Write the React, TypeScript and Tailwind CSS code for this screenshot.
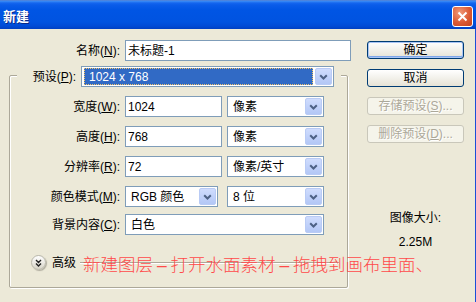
import type {ReactNode} from 'react';

// XP-style chevron used in the combo boxes
function Chevron() {
  return (
    <svg width="9" height="6" viewBox="0 0 9 6">
      <path d="M1.2 1.2 4.5 4.5 7.8 1.2" fill="none" stroke="#4d6185" strokeWidth="2" />
    </svg>
  );
}

function Select({
  width,
  children,
  active = false,
}: {
  width: string;
  children: ReactNode;
  active?: boolean;
}) {
  return (
    <div className={`flex h-[21px] items-stretch border border-[#7f9db9] bg-white p-px ${width}`}>
      {active ? (
        <div className="mr-[2px] ml-px flex flex-1 items-center border border-dotted border-[#f0c36a] bg-[#316ac5] pl-[4px] text-white">
          {children}
        </div>
      ) : (
        <div className="flex flex-1 items-center pl-[4px]">{children}</div>
      )}
      <div className="flex w-[17px] items-center justify-center rounded-[2px] border border-[#b9cbf5] bg-gradient-to-b from-[#cfdcfd] to-[#b3c7f6]">
        <Chevron />
      </div>
    </div>
  );
}

function Input({width, value}: {width: string; value: string}) {
  return (
    <div className={`flex h-[21px] items-center border border-[#7f9db9] bg-white pl-[2px] ${width}`}>
      {value}
    </div>
  );
}

function Label({text, keyChar}: {text: string; keyChar: string}) {
  return (
    <span>
      {text}(<u>{keyChar}</u>):
    </span>
  );
}

function Row({label, children}: {label: ReactNode; children: ReactNode}) {
  return (
    <div className="flex items-center">
      <div className="w-[110px] text-right">{label}</div>
      <div className="ml-[5px] flex items-center">{children}</div>
    </div>
  );
}

function Button({
  children,
  variant = 'normal',
}: {
  children: ReactNode;
  variant?: 'default' | 'normal' | 'disabled';
}) {
  const styles = {
    default:
      'border-[#003c74] bg-gradient-to-b from-white to-[#e6e3d6] shadow-[inset_0_0_0_1px_#a9c5f5,inset_0_-1px_0_1px_#7ea6ea] text-black',
    normal: 'border-[#003c74] bg-gradient-to-b from-white to-[#e6e3d6] text-black',
    disabled: 'border-[#c9c7ba] bg-[#f5f4ea] text-[#aca899]',
  };
  return (
    <div
      className={`flex h-[18px] w-[97px] items-center justify-center rounded-[3px] border ${styles[variant]}`}
    >
      {children}
    </div>
  );
}

function Dash() {
  return <span className="inline-block w-[17.5px] text-center">–</span>;
}

export default function App() {
  return (
    <div className="relative h-[302px] w-[476px] overflow-hidden bg-[#ece9d8] font-[family-name:'Liberation_Sans','Noto_Sans_CJK_SC',sans-serif] text-[12px] leading-[14px] text-black">
      {/* Title bar */}
      <div className="flex h-[29px] items-start justify-between bg-[linear-gradient(to_bottom,#5a7bc4_0px,#3d8ef6_1px,#1466ef_3px,#0a5ce9_5px,#0055e4_10px,#0053e0_22px,#004bd6_26px,#0040c2_29px)]">
        <span className="pt-[10px] pl-[3px] text-[13px] leading-[14px] font-bold text-white [text-shadow:1px_1px_0_#0b2a88]">
          新建
        </span>
        <div className="mt-[6px] mr-[3px] flex h-[21px] w-[21px] items-center justify-center rounded-[3px] border border-white bg-[radial-gradient(circle_at_35%_30%,#f09a7a,#dc5a34_55%,#c2411c)]">
          <svg width="11" height="11" viewBox="0 0 11 11">
            <path d="M1.5 1.5 9.5 9.5M9.5 1.5 1.5 9.5" stroke="white" strokeWidth="2" />
          </svg>
        </div>
      </div>

      <div className="flex h-[273px] border-r border-[#1b4fd8]">
        {/* Left column */}
        <div className="w-[360px]">
          <div className="mt-[11px] flex items-center">
            <div className="w-[120px] text-right">
              <Label text="名称" keyChar="N" />
            </div>
            <Input width="ml-[5px] w-[226px]" value="未标题-1" />
          </div>

          {/* Preset group box */}
          <div className="mt-[14px] ml-[9px] h-[213px] w-[339px] rounded-[2px] border border-[#aca899] shadow-[inset_1px_1px_0_white,1px_1px_0_white]">
            <div className="-mt-[10px] ml-[7px] flex w-[324px] items-center bg-[#ece9d8] pr-[7px]">
              <div className="flex-1 pr-[5px] text-right">
                <Label text="预设" keyChar="P" />
              </div>
              <Select width="w-[253px]" active>
                1024 x 768
              </Select>
            </div>

            <div className="mt-[9px] flex flex-col gap-[9px]">
              <Row label={<Label text="宽度" keyChar="W" />}>
                <Input width="w-[97px]" value="1024" />
                <div className="ml-[5px]">
                  <Select width="w-[97px]">像素</Select>
                </div>
              </Row>
              <Row label={<Label text="高度" keyChar="H" />}>
                <Input width="w-[97px]" value="768" />
                <div className="ml-[5px]">
                  <Select width="w-[97px]">像素</Select>
                </div>
              </Row>
              <Row label={<Label text="分辨率" keyChar="R" />}>
                <Input width="w-[97px]" value="72" />
                <div className="ml-[5px]">
                  <Select width="w-[97px]">像素/英寸</Select>
                </div>
              </Row>
              <Row label={<Label text="颜色模式" keyChar="M" />}>
                <Select width="w-[93px]">RGB 颜色</Select>
                <div className="ml-[9px]">
                  <Select width="w-[97px]">8 位</Select>
                </div>
              </Row>
            </div>
            <div className="mt-[7px]">
              <Row label={<Label text="背景内容" keyChar="C" />}>
                <Select width="w-[199px]">白色</Select>
              </Row>
            </div>

            {/* Advanced toggle */}
            <div className="mt-[20px] flex h-[15px] items-center">
              <div className="ml-[21px] flex h-[15px] w-[15px] items-center justify-center rounded-full border border-[#b8b6aa] bg-gradient-to-b from-white to-[#d8d5c8] shadow-[1px_1px_1px_#b0ad9f]">
                <svg width="7" height="8" viewBox="0 0 7 8">
                  <path d="M1 1 3.5 3.5 6 1M1 4.5 3.5 7 6 4.5" fill="none" stroke="#222" strokeWidth="1.4" />
                </svg>
              </div>
              <span className="ml-[6px]">高级</span>
              <div className="mr-[8px] ml-[4px] h-[2px] flex-1 border-t border-b border-t-[#aca899] border-b-white" />
            </div>
          </div>
        </div>

        {/* Right column */}
        <div className="flex flex-col items-center pl-[7px]">
          <div className="mt-[12px] flex flex-col gap-[10px]">
            <Button variant="default">确定</Button>
            <Button>取消</Button>
            <Button variant="disabled">
              <span className="[text-shadow:1px_1px_0_white]">
                存储预设(<u>S</u>)...
              </span>
            </Button>
            <Button variant="disabled">
              <span className="[text-shadow:1px_1px_0_white]">
                删除预设(<u>D</u>)...
              </span>
            </Button>
          </div>
          <div className="mt-[68px] w-[97px] text-center">图像大小:</div>
          <div className="mt-[10px] w-[97px] text-center">2.25M</div>
        </div>
      </div>

      {/* Red annotation laid over the dialog */}
      <div className="absolute top-[255px] left-[83px] text-[17.5px] leading-[20px] font-light whitespace-nowrap text-[#ff4a4a]">
        新建图层<Dash />打开水面素材<Dash />拖拽到画布里面、
      </div>
    </div>
  );
}
